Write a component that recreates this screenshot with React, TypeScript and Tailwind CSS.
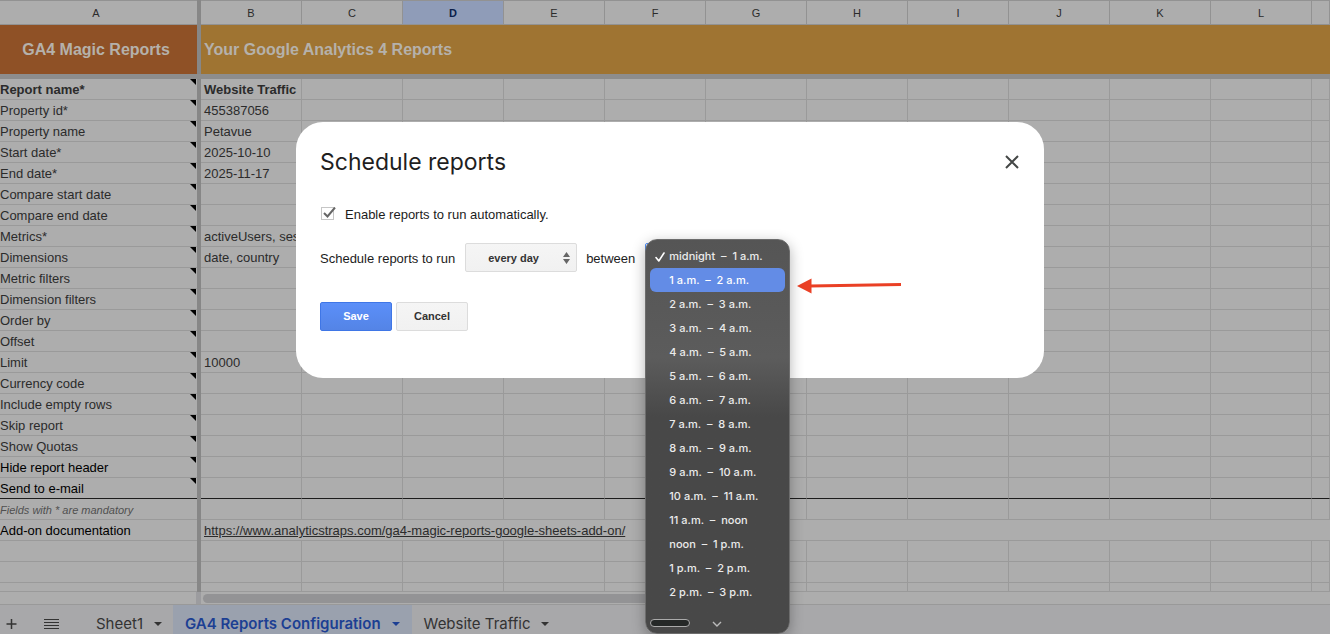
import { useState } from "react"

type Row = {
  label: string
  value?: string
  bold?: boolean
  dark?: boolean
}

const columns = ["B", "C", "D", "E", "F", "G", "H", "I", "J", "K", "L", ""]

const rows: Row[] = [
  { label: "Report name*", value: "Website Traffic", bold: true },
  { label: "Property id*", value: "455387056" },
  { label: "Property name", value: "Petavue" },
  { label: "Start date*", value: "2025-10-10" },
  { label: "End date*", value: "2025-11-17" },
  { label: "Compare start date" },
  { label: "Compare end date" },
  { label: "Metrics*", value: "activeUsers, sessions" },
  { label: "Dimensions", value: "date, country" },
  { label: "Metric filters" },
  { label: "Dimension filters" },
  { label: "Order by" },
  { label: "Offset" },
  { label: "Limit", value: "10000" },
  { label: "Currency code" },
  { label: "Include empty rows" },
  { label: "Skip report" },
  { label: "Show Quotas" },
  { label: "Hide report header", dark: true },
  { label: "Send to e-mail", dark: true },
]

const hours = [
  "midnight  –  1 a.m.",
  "1 a.m.  –  2 a.m.",
  "2 a.m.  –  3 a.m.",
  "3 a.m.  –  4 a.m.",
  "4 a.m.  –  5 a.m.",
  "5 a.m.  –  6 a.m.",
  "6 a.m.  –  7 a.m.",
  "7 a.m.  –  8 a.m.",
  "8 a.m.  –  9 a.m.",
  "9 a.m.  –  10 a.m.",
  "10 a.m.  –  11 a.m.",
  "11 a.m.  –  noon",
  "noon  –  1 p.m.",
  "1 p.m.  –  2 p.m.",
  "2 p.m.  –  3 p.m.",
]

function EmptyCells({ from = 0, border = "border-b-[#9a9a9a]" }: { from?: number; border?: string }) {
  return (
    <>
      {columns.slice(from).map((c, i) => (
        <td key={c + i} className={`border-r border-b border-r-[#9a9a9a] p-0 ${border}`} />
      ))}
    </>
  )
}

function Divider() {
  return <td className="bg-[#878787] p-0" />
}

function Sheet() {
  return (
    <table className="w-full min-w-[1330px] table-fixed border-separate border-spacing-0 text-left text-[13px] leading-[18px] text-[#2b2b2b]">
      <colgroup>
        <col className="w-[197px]" />
        <col className="w-1" />
        {columns.map((c, i) => (
          <col key={i} className={c ? "w-[101px]" : ""} />
        ))}
      </colgroup>
      <thead>
        <tr className="h-[25px] text-center text-[11px] leading-[22px]">
          <th className="border-y border-[#929292] p-0 pr-[5px] font-normal">A</th>
          <th className="bg-[#878787] p-0" />
          {columns.map((c, i) => (
            <th
              key={i}
              className={`border-y border-r border-[#929292] p-0 ${
                c === "D" ? "bg-[#8f9cb8] font-bold text-[#0b1f4b]" : "font-normal"
              }`}
            >
              {c}
            </th>
          ))}
        </tr>
      </thead>
      <tbody>
        <tr className="h-[49px] text-base font-bold text-[#b5b1ab]">
          <td className="bg-[#8f5126] p-0 pr-[5px] text-center">GA4 Magic Reports</td>
          <Divider />
          <td colSpan={12} className="bg-[#9f7432] px-[3px] py-0">
            Your Google Analytics 4 Reports
          </td>
        </tr>
        <tr className="h-[5px]">
          <td colSpan={14} className="bg-[#8d8d8d] p-0" />
        </tr>
        {rows.map((row, i) => {
          const line = i === rows.length - 1 ? "border-b-[#1c1c1c]" : "border-b-[#9a9a9a]"
          return (
            <tr key={row.label} className={`h-[21px] ${row.bold ? "font-bold" : ""} ${row.dark ? "text-black" : ""}`}>
              <td className={`border-b p-0 ${line}`}>
                <div className="flex justify-between">
                  <span className="pt-0.5">{row.label}</span>
                  <svg width="6" height="6" viewBox="0 0 6 6" className="mr-px">
                    <path d="M0 0h6v6z" fill="#000" />
                  </svg>
                </div>
              </td>
              <Divider />
              <td className={`border-r border-b border-r-[#9a9a9a] pt-0.5 pr-0 pb-0 pl-[3px] whitespace-nowrap ${line}`}>
                {row.value}
              </td>
              <EmptyCells from={1} border={line} />
            </tr>
          )
        })}
        <tr className="h-[21px]">
          <td className="border-b border-[#9a9a9a] p-0 pt-0.5 text-[11px] text-[#505050] italic">
            Fields with * are mandatory
          </td>
          <Divider />
          <EmptyCells />
        </tr>
        <tr className="h-[21px]">
          <td className="border-b border-[#9a9a9a] p-0 pt-0.5 text-black">Add-on documentation</td>
          <Divider />
          <td colSpan={12} className="border-b border-[#9a9a9a] px-[3px] pt-0.5 pb-0">
            <a href="https://www.analyticstraps.com/ga4-magic-reports-google-sheets-add-on/" className="underline">
              https://www.analyticstraps.com/ga4-magic-reports-google-sheets-add-on/
            </a>
          </td>
        </tr>
        {["h-[21px]", "h-[21px]", "h-[9px]"].map((h, i) => (
          <tr key={i} className={h}>
            <td className="border-b border-[#9a9a9a] p-0" />
            <Divider />
            <EmptyCells />
          </tr>
        ))}
      </tbody>
    </table>
  )
}

function Caret() {
  return (
    <svg width="8" height="4" viewBox="0 0 8 4" fill="currentColor">
      <path d="M0 0h8L4 4z" />
    </svg>
  )
}

function SheetTabs() {
  return (
    <nav className="flex h-[30px] items-stretch overflow-hidden border-t border-[#999] bg-[#a8a8aa] font-[Inter,sans-serif] text-[15px] leading-[22px] text-[#333]">
      <button aria-label="Add sheet" className="pt-[9px] pr-3 pl-1">
        <svg width="15" height="20" viewBox="0 0 15 20" stroke="currentColor" strokeWidth="1.5">
          <path d="M7.5 5v10M2.5 10h10" />
        </svg>
      </button>
      <button aria-label="All sheets" className="px-3 pt-[9px]">
        <svg width="16" height="20" viewBox="0 0 16 20" stroke="currentColor" strokeWidth="1">
          <path d="M1 5.5h15M1 8.5h15M1 11.5h15M1 14.5h15" />
        </svg>
      </button>
      <button className="ml-[25px] flex items-center gap-[11px] pt-[8px] pr-[11px]">
        Sheet1 <Caret />
      </button>
      <button className="flex items-center gap-[11px] bg-[#9aa1ae] px-3 pt-[8px] font-semibold text-[#1c3f93]">
        GA4 Reports Configuration <Caret />
      </button>
      <button className="flex items-center gap-[11px] px-3 pt-[8px]">
        Website Traffic <Caret />
      </button>
    </nav>
  )
}

function HourMenu({ selected, onSelect }: { selected: number; onSelect: (i: number) => void }) {
  return (
    <div className="absolute -top-1 left-0 z-10 w-[145px] rounded-xl border border-[#6d6d6d] bg-linear-to-b from-[#555] via-[#5c5c5c] via-30% to-[#484848] to-45% p-1 font-[Inter,sans-serif] text-[11px] font-medium text-[#ebebeb] shadow-[0_4px_14px_rgba(0,0,0,0.3)]">
      <ul role="listbox" aria-label="Hour">
        {hours.map((hour, i) => (
          <li key={hour} role="option" aria-selected={i === selected}>
            <button
              onClick={() => onSelect(i)}
              className={`flex h-6 w-full items-center rounded-md whitespace-pre ${i === 1 ? "bg-[#638ce6] text-white" : ""}`}
            >
              <span className="flex w-[19px] shrink-0 justify-center pt-0.5">
                {i === selected && (
                  <svg width="10" height="10" viewBox="0 0 10 10" fill="none" stroke="#fff" strokeWidth="1.6">
                    <path d="M1 5.5 3.8 9 9 1" strokeLinecap="round" strokeLinejoin="round" />
                  </svg>
                )}
              </span>
              {hour}
            </button>
          </li>
        ))}
      </ul>
      <div className="flex h-[25px] items-end pb-0.5">
        <span className="h-2 w-10 rounded-full border border-[#aaa] bg-[#252827]" />
        <svg width="10" height="6" viewBox="0 0 10 6" fill="none" stroke="#bbb" strokeWidth="1.4" className="ml-[22px]">
          <path d="M1 1l4 4 4-4" />
        </svg>
      </div>
    </div>
  )
}

function ScheduleDialog() {
  const [enabled, setEnabled] = useState(true)
  const [hour, setHour] = useState(0)

  return (
    <div
      role="dialog"
      aria-labelledby="schedule-title"
      className="h-64 w-[748px] rounded-[27px] bg-white px-6 pt-6 text-[13px] text-[#1c1c1c]"
    >
      <div className="flex items-center justify-between">
        <h1 id="schedule-title" className="font-[Inter,sans-serif] text-[23px] leading-8 text-[#1f1f1f]">
          Schedule reports
        </h1>
        <button aria-label="Close">
          <svg width="16" height="16" viewBox="0 0 16 16" stroke="#444746" strokeWidth="2">
            <path d="M2 2l12 12M14 2L2 14" />
          </svg>
        </button>
      </div>

      <label className="mt-[27px] flex h-5 items-center gap-[9px]">
        <span className="relative mb-[3px] ml-px flex">
          <input
            type="checkbox"
            checked={enabled}
            onChange={(e) => setEnabled(e.target.checked)}
            className="size-[13px] appearance-none border border-[#c6c6c6] bg-white"
          />
          {enabled && (
            <svg
              width="15"
              height="13"
              viewBox="0 0 15 13"
              fill="none"
              stroke="#666"
              strokeWidth="2"
              className="pointer-events-none absolute top-0 left-0"
            >
              <path d="M3 6l3.500 3.500L14 0.500" />
            </svg>
          )}
        </span>
        <span className="ml-0.5">Enable reports to run automatically.</span>
      </label>

      <div className="mt-[18px] flex h-[29px] items-center">
        <label htmlFor="frequency" className="pt-0.5">
          Schedule reports to run
        </label>
        <span className="relative ml-2.5 flex">
          <select
            id="frequency"
            className="h-[29px] w-28 appearance-none rounded-xs border border-[#dcdcdc] bg-linear-to-b from-[#f5f5f5] to-[#f1f1f1] pt-px pl-[22px] text-[11px] font-bold text-[#333]"
          >
            <option>every day</option>
            <option>every week</option>
            <option>every month</option>
          </select>
          <svg
            width="7"
            height="12"
            viewBox="0 0 7 12"
            fill="#666"
            className="pointer-events-none absolute top-[9px] right-[7px]"
          >
            <path d="M0 5l3.500-5L7 5zM0 7h7l-3.500 5z" />
          </svg>
        </span>
        <span className="ml-[9px] pt-0.5">between</span>
        <div className="relative ml-2.5 h-[29px] w-[145px]">
          <button
            aria-haspopup="listbox"
            aria-label="Hour"
            className="h-full w-[130px] rounded-xs border border-[#4d90fe]"
          />
          <HourMenu selected={hour} onSelect={setHour} />
          <svg width="106" height="18" viewBox="0 0 106 18" className="absolute top-[33px] left-[151px]">
            <path d="M14 10L105 8.500" stroke="#ea4025" strokeWidth="3" />
            <path d="M1 10L15.500 2.500v15z" fill="#ea4025" />
          </svg>
        </div>
      </div>

      <div className="mt-[30px] flex gap-1 text-[11px] font-bold">
        <button className="h-[29px] w-[72px] rounded-xs border border-[#3f76e6] bg-linear-to-b from-[#5b8ff9] to-[#5484e6] text-white">
          Save
        </button>
        <button className="h-[29px] w-[72px] rounded-xs border border-[#dcdcdc] bg-linear-to-b from-[#f5f5f5] to-[#f1f1f1] text-[#333]">
          Cancel
        </button>
      </div>
    </div>
  )
}

export default function App() {
  return (
    <div className="relative min-h-screen overflow-hidden bg-[#adadad] font-['Liberation_Sans',Arial,sans-serif]">
      <Sheet />
      <div className="flex h-3 items-center">
        <div className="ml-[196px] h-full w-[5px] bg-[#9c9c9f]" />
        <div className="ml-0.5 h-[9px] w-1/2 max-w-[560px] rounded-full bg-[#939395]" />
      </div>
      <SheetTabs />
      <div className="absolute inset-0 flex items-start justify-center pt-[122px] pl-2.5">
        <ScheduleDialog />
      </div>
    </div>
  )
}
